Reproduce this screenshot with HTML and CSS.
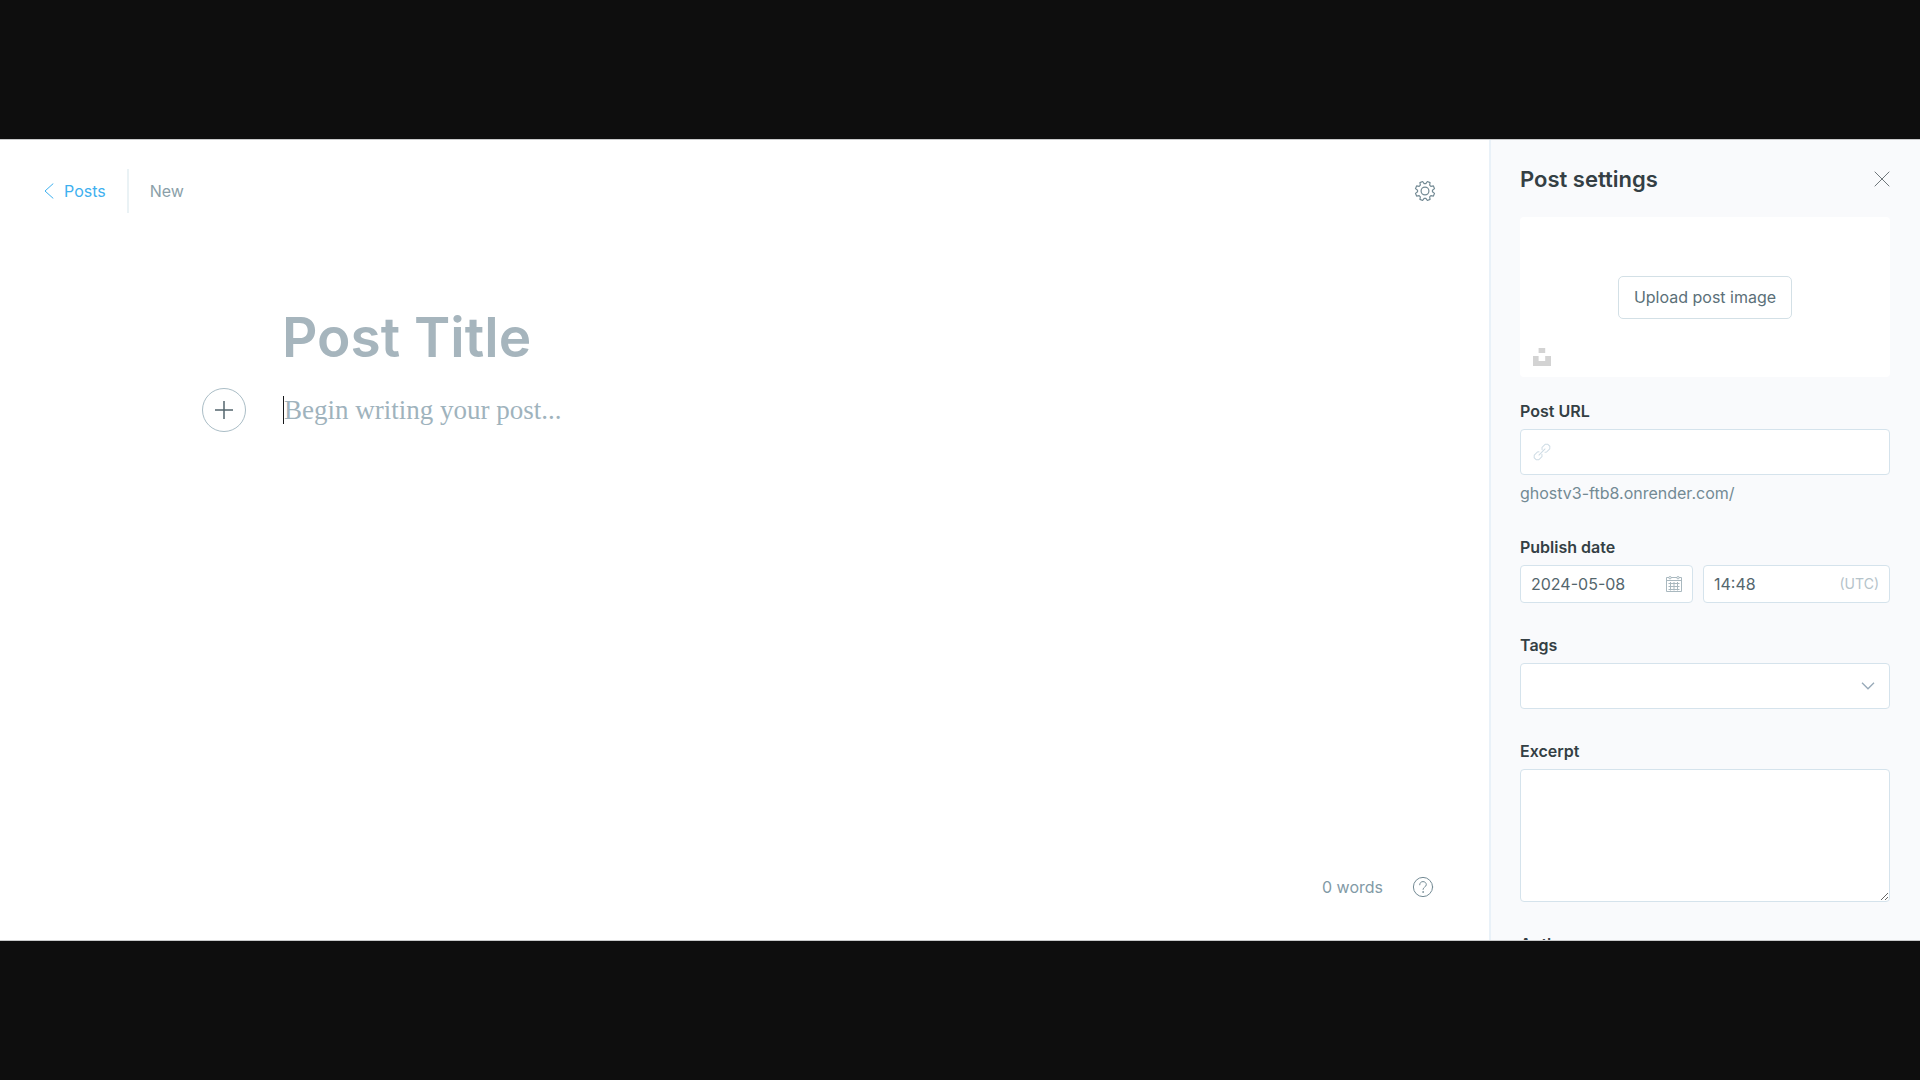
FILE: index.html
```html
<!DOCTYPE html>
<html lang="en">
<head>
<meta charset="utf-8">
<title>New post</title>
<link rel="stylesheet" href="styles.css">
</head>
<body>
<div class="app">
  <main class="editor">
    <header class="editor-header">
      <nav class="crumbs">
        <a class="back" href="#posts">
          <svg width="10" height="16" viewBox="0 0 10 16" fill="none" stroke="currentColor" stroke-linecap="round" stroke-linejoin="round"><path d="M9 .8 1 8l8 7.2"/></svg>
          Posts
        </a>
        <span class="status">New</span>
      </nav>
      <button class="icon-button gear" type="button" aria-label="Settings">
        <svg width="22" height="22" viewBox="-11 -11 22 22" fill="none" stroke="currentColor" stroke-width="1.2" stroke-linejoin="round"><circle r="3.9"/><path d="M7.45.85 9.51 2.37 8.4 5.05 5.87 4.67 4.67 5.87 5.05 8.4 2.37 9.51.85 7.45-.85 7.45-2.37 9.51-5.05 8.4-4.67 5.87-5.87 4.67-8.4 5.05-9.51 2.37-7.45.85-7.45-.85-9.51-2.37-8.4-5.05-5.87-4.67-4.67-5.87-5.05-8.4-2.37-9.51-.85-7.45.85-7.45 2.37-9.51 5.05-8.4 4.67-5.87 5.87-4.67 8.4-5.05 9.51-2.37 7.45-.85Z"/></svg>
      </button>
    </header>
    <div class="canvas">
      <input class="title" type="text" placeholder="Post Title" aria-label="Post title">
      <div class="body-row">
        <button class="add" type="button" aria-label="Add a card">
          <svg width="18" height="18" viewBox="0 0 18 18" fill="none" stroke="currentColor" stroke-width="1.5"><path d="M9 0v18M0 9h18"/></svg>
        </button>
        <span class="caret"></span>
        <textarea class="body-text" rows="1" placeholder="Begin writing your post..." aria-label="Post body"></textarea>
      </div>
    </div>
    <footer class="editor-footer">
      <span>0 words</span>
      <button class="icon-button" type="button" aria-label="Help">
        <svg width="22" height="22" viewBox="0 0 22 22" fill="none" stroke="currentColor" stroke-linecap="round"><circle cx="11" cy="11" r="9.6"/><path d="M7.7 8.8c0-1.900 1.400-3.200 3.300-3.200s3.300 1.300 3.300 3.100c0 2.300-3.300 2.300-3.300 4.700"/><circle cx="11" cy="16" r=".3" fill="currentColor"/></svg>
      </button>
    </footer>
  </main>

  <aside class="panel">
    <header class="panel-header">
      <h2>Post settings</h2>
      <button class="icon-button close" type="button" aria-label="Close">
        <svg width="16" height="16" viewBox="0 0 16 16" fill="none" stroke="currentColor"><path d="m.7.7 14.600 14.600M15.300.7.7 15.300"/></svg>
      </button>
    </header>
    <div class="uploader">
      <button class="upload" type="button">Upload post image</button>
      <button class="icon-button unsplash" type="button" aria-label="Unsplash">
        <svg width="18" height="18" viewBox="0 0 18 18" fill="currentColor"><path d="M5.600 0h6.600v5H5.600zM0 8h5.600v5h6.600V8H18v10H0z"/></svg>
      </button>
    </div>
    <form class="fields">
      <div class="field">
        <label for="url">Post URL</label>
        <div class="control">
          <svg class="link-icon" width="18" height="18" viewBox="-9 -9 18 18" fill="none" stroke="currentColor" stroke-linecap="round"><g transform="rotate(-45)"><path d="M-2-2.200-3.200-3.200h-4.600l-1.800 1.700v3l1.800 1.700h4.600L-1.600 1.500M2 2.200l1.200 1h4.600l1.800-1.700v-3L7.800-3.200H3.200L1.600-1.500M-4.300 0h8.600"/></g></svg>
          <input id="url" type="text">
        </div>
        <p class="hint">ghostv3-ftb8.onrender.com/</p>
      </div>
      <div class="field">
        <label for="date">Publish date</label>
        <div class="date-row">
          <div class="control small">
            <input id="date" type="text" value="2024-05-08">
            <svg class="calendar" width="16" height="16" viewBox="0 0 16 16" fill="none" stroke="currentColor"><path d="M3 1.500H.5v14h15v-14H13M5 1.500h6M.5 4.500h15M2.500 7.500h11M2.500 10.500h11M2.500 13.500h11M4.500 6v8.500M8 6v8.500M11.500 6v8.500"/><circle cx="4" cy="1.700" r="1.200"/><circle cx="12" cy="1.700" r="1.200"/></svg>
          </div>
          <div class="control small">
            <input type="text" value="14:48" aria-label="Publish time">
            <span class="zone">(UTC)</span>
          </div>
        </div>
      </div>
      <div class="field">
        <label for="tags">Tags</label>
        <div class="control">
          <select id="tags"><option></option></select>
          <svg class="chevron" width="14" height="8" viewBox="0 0 14 8" fill="none" stroke="currentColor" stroke-width="1.300"><path d="m1 .8 6 6 6-6"/></svg>
        </div>
      </div>
      <div class="field">
        <label for="excerpt">Excerpt</label>
        <textarea id="excerpt" class="excerpt"></textarea>
      </div>
      <div class="field">
        <label for="authors">Authors</label>
        <div class="control"><input id="authors" type="text"></div>
      </div>
    </form>
  </aside>
</div>
</body>
</html>
```
FILE: styles.css
```css
* { box-sizing: border-box; }

body {
  margin: 0;
  height: 100vh;
  padding: 139px 0;
  background: #0e0e0e;
  font: 16px/24px Inter, "Liberation Sans", sans-serif;
  color: #343f44;
}

button, input, select, textarea {
  margin: 0;
  padding: 0;
  border: 0;
  background: none;
  font: inherit;
  color: inherit;
  outline: 0;
}

svg { display: block; flex: none; }

.app {
  display: grid;
  grid-template-columns: minmax(0, 1fr) 431px;
  height: 100%;
  border: solid #c8c9ca;
  border-width: 1px 0;
  overflow: hidden;
  background: #fff;
}

.editor { display: flex; flex-direction: column; min-height: 0; }

.editor-header {
  display: flex;
  align-items: center;
  justify-content: space-between;
  padding: 29px 53px 0 44px;
}

.crumbs { display: flex; align-items: center; }

.back {
  display: flex;
  align-items: center;
  gap: 10px;
  height: 44px;
  padding-right: 21px;
  border-right: 2px solid #eaf2f5;
  color: #3eb0ef;
  text-decoration: none;
}

.status { padding-left: 21px; color: #8b9fa9; }

.icon-button { display: flex; color: #738a94; }

.canvas { flex: 1; padding: 88px 120px 0 202px; }

.title {
  display: block;
  width: 100%;
  height: 72px;
  padding-left: 80px;
  font-size: 55px;
  font-weight: 600;
  line-height: 72px;
}

.title::placeholder { color: #a6b5bd; opacity: 1; }

.body-row { display: flex; align-items: center; margin-top: 15px; }

.add {
  display: flex;
  align-items: center;
  justify-content: center;
  width: 44px;
  height: 44px;
  margin-right: 37px;
  border: 1px solid #aabdc6;
  border-radius: 50%;
  color: #54666d;
}

.caret { width: 1px; height: 28px; background: #15171a; }

.body-text {
  flex: 1;
  height: 36px;
  resize: none;
  overflow: hidden;
  font: 27px/36px "Liberation Serif", serif;
}

.body-text::placeholder { color: #9fb3bd; opacity: 1; }

.editor-footer {
  display: flex;
  align-items: center;
  justify-content: flex-end;
  gap: 29px;
  padding: 0 55px 41px;
  color: #829aa6;
}

.panel {
  min-height: 0;
  overflow: hidden;
  padding: 0 30px 0 29px;
  border-left: 2px solid #e9f1f8;
  background: #f9fafc;
}

.panel-header {
  display: flex;
  align-items: center;
  justify-content: space-between;
  height: 77px;
}

h2 { margin: 0; font-size: 22px; font-weight: 600; line-height: 28px; }

.close { color: #6f777b; }

.uploader {
  position: relative;
  display: flex;
  align-items: center;
  justify-content: center;
  height: 160px;
  border-radius: 4px;
  background: #fff;
}

.upload {
  height: 43px;
  padding: 0 15px;
  border: 1px solid #d3e0e6;
  border-radius: 5px;
  color: #5b7078;
}

.unsplash { position: absolute; left: 13px; bottom: 11px; color: #d3d3d3; }

.fields { display: grid; gap: 30px; margin-top: 22px; }

.field { display: grid; gap: 6px; }

.field label { font-weight: 600; }

.control, .excerpt {
  border: 1px solid #d5e3ec;
  border-radius: 4px;
  background: #fff;
}

.control {
  display: flex;
  align-items: center;
  height: 46px;
  padding: 0 12px;
}

.control input, .control select { flex: 1; width: 100%; min-width: 0; height: 100%; }

.control select { appearance: none; }

.control.small { height: 38px; padding: 0 10px; color: #54666d; }

.link-icon { margin-right: 8px; color: #cddbe4; }

.hint { margin: 0; color: #738a94; }

.date-row { display: grid; grid-template-columns: 173px 1fr; gap: 10px; }

.calendar { color: #a9b8bf; }

.zone { font-size: 14px; color: #b5c3ca; }

.chevron { margin-right: 2px; color: #97a9b8; }

.excerpt { display: block; width: 100%; height: 133px; padding: 10px; resize: vertical; }
```
